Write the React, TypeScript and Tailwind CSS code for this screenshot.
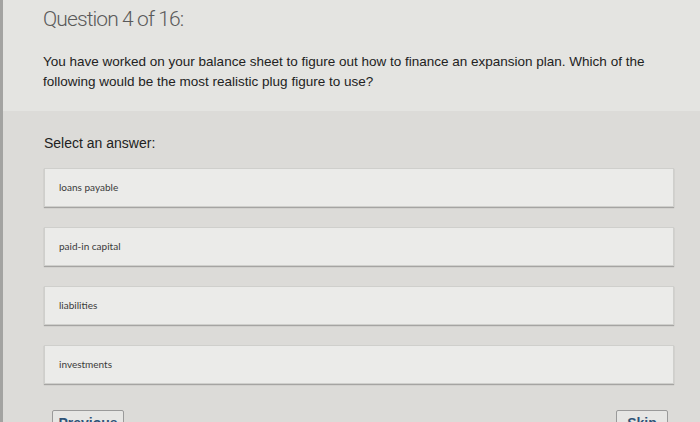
import React from 'react';

const options = ['loans payable', 'paid-in capital', 'liabilities', 'investments'];

const App: React.FC = () => {
  return (
    <div className="w-[700px] h-[422px] overflow-hidden flex bg-[#dcdbd8] font-['Liberation_Sans',Arial,sans-serif]">
      {/* dark strip at the left edge */}
      <div className="w-[3px] bg-[#a3a3a1] shrink-0" />

      <div className="flex-1 flex flex-col">
        {/* question header */}
        <div className="h-[111px] shrink-0 bg-[#e4e4e1] pl-[40px] pr-[30px] pt-[6px]">
          <h1 className="text-[21px] leading-[26px] font-light text-[#5a5a5a] tracking-[-0.9px] font-['Roboto',sans-serif]">
            Question 4 of 16:
          </h1>
          <p className="mt-[20px] text-[13.5px] leading-[20px] text-[#222]">
            You have worked on your balance sheet to figure out how to finance an expansion plan. Which of the
            following would be the most realistic plug figure to use?
          </p>
        </div>

        {/* answers */}
        <div className="shrink-0 pl-[41px] pr-[26px] pt-[22px]">
          <p className="text-[14px] leading-[20px] text-[#222]">Select an answer:</p>

          <div className="mt-[15px] flex flex-col gap-[20px]">
            {options.map((opt) => (
              <div
                key={opt}
                className="h-[39px] flex items-center pl-[14px] bg-[#ebebe9] border border-[#cfcfcc] shadow-[0_1px_1px_rgba(0,0,0,0.25)] text-[10px] text-[#3a3a3a] font-['Lato',sans-serif]"
              >
                {opt}
              </div>
            ))}
          </div>

          <div className="mt-[26px] flex justify-between pl-[8px] pr-[6px]">
            <button className="h-[26px] w-[72px] border border-[#9a9a9a] rounded-[2px] bg-[#e6e6e4] text-[14px] font-bold text-[#2f5378] leading-[22px]">
              Previous
            </button>
            <button className="h-[26px] w-[52px] border border-[#9a9a9a] rounded-[2px] bg-[#e6e6e4] text-[14px] font-bold text-[#2f5378] leading-[22px]">
              Skip
            </button>
          </div>
        </div>
      </div>
    </div>
  );
};

export default App;
